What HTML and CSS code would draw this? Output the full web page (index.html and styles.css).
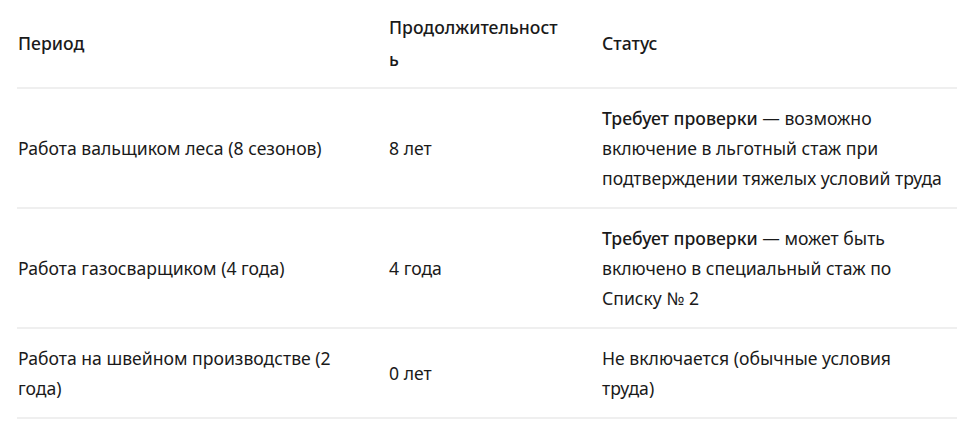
FILE: index.html
```html
<!DOCTYPE html>
<html lang="ru">
<head>
<meta charset="utf-8">
<link rel="stylesheet" href="styles.css">
</head>
<body>
<div class="wrap">
<table class="grid">
  <colgroup>
    <col class="c1"><col class="c2"><col class="c3">
  </colgroup>
  <thead>
    <tr>
      <th>Период</th>
      <th class="dur">Продолжительность</th>
      <th class="last">Статус</th>
    </tr>
  </thead>
  <tbody>
    <tr>
      <td>Работа вальщиком леса (8 сезонов)</td>
      <td>8 лет</td>
      <td class="last"><strong>Требует проверки</strong> — возможно включение в льготный стаж при подтверждении тяжелых условий труда</td>
    </tr>
    <tr>
      <td>Работа газосварщиком (4 года)</td>
      <td>4 года</td>
      <td class="last"><strong>Требует проверки</strong> — может быть включено в специальный стаж по Списку № 2</td>
    </tr>
    <tr>
      <td>Работа на швейном производстве (2 года)</td>
      <td>0 лет</td>
      <td class="last">Не включается (обычные условия труда)</td>
    </tr>
  </tbody>
</table>
</div>
</body>
</html>
```
FILE: styles.css
```css
html, body {
  margin: 0;
  padding: 0;
  background: #ffffff;
}
.wrap {
  padding: 0 19px 0 17px;
}
.grid {
  width: 940px;
  border-collapse: collapse;
  table-layout: fixed;
  font-family: "Noto Sans", "Open Sans", sans-serif;
  font-size: 17.6px;
  color: #1a1a1a;
}
.c1 { width: 371px; }
.c2 { width: 213px; }
.c3 { width: 356px; }
.grid th, .grid td {
  text-align: left;
  vertical-align: middle;
  padding: 14px 16px 14px 1px;
  line-height: 30px;
  border-bottom: 2px solid #efefef;
}
.grid th {
  font-weight: 500;
  padding-top: 11px;
  padding-bottom: 12px;
  line-height: 32px;
}
.grid th.dur {
  padding-right: 40px;
  overflow-wrap: anywhere;
}
.grid .last {
  padding-right: 15px;
}
.grid strong {
  font-weight: 500;
}
```
